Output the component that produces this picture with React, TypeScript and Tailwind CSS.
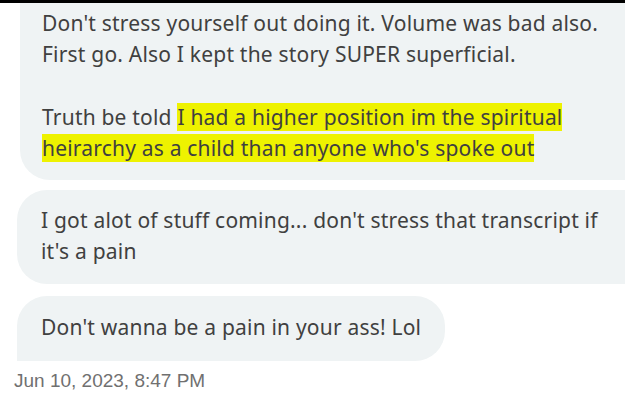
import React from "react";

const bubble = "bg-[#eff3f4] text-[#404040] text-[21px] leading-[31px] tracking-[0.2px]";

export default function App() {
    return (
        <div className="w-[625px] h-[400px] overflow-hidden bg-white font-['Noto_Sans',sans-serif]">
            <div className="h-[3px] bg-black" />

            <div className={`${bubble} ml-[20px] mr-[-60px] h-[177px] rounded-bl-[30px] pl-[22px] pt-[5px] whitespace-nowrap`}>
                <p>Don't stress yourself out doing it. Volume was bad also.</p>
                <p>First go. Also I kept the story SUPER superficial.</p>
                <p className="mt-[32px]">
                    Truth be told <span className="bg-[#eef200]">I had a higher position im the spiritual</span>
                </p>
                <p>
                    <span className="bg-[#eef200]">heirarchy as a child than anyone who's spoke out</span>
                </p>
            </div>

            <div className={`${bubble} ml-[17px] mr-[-60px] mt-[10px] h-[94px] rounded-l-[30px] pl-[24px] pt-[15px] whitespace-nowrap`}>
                <p>I got alot of stuff coming... don't stress that transcript if</p>
                <p>it's a pain</p>
            </div>

            <div className={`${bubble} ml-[17px] mt-[12px] h-[65px] w-[428px] rounded-tl-[30px] rounded-r-[30px] pl-[24px] pt-[16px] whitespace-nowrap`}>
                <p>Don't wanna be a pain in your ass! Lol</p>
            </div>

            <div className="ml-[14px] mt-[9px] font-['Liberation_Sans',sans-serif] text-[19px] leading-[22px] text-[#707070]">
                Jun 10, 2023, 8:47 PM
            </div>
        </div>
    );
}
